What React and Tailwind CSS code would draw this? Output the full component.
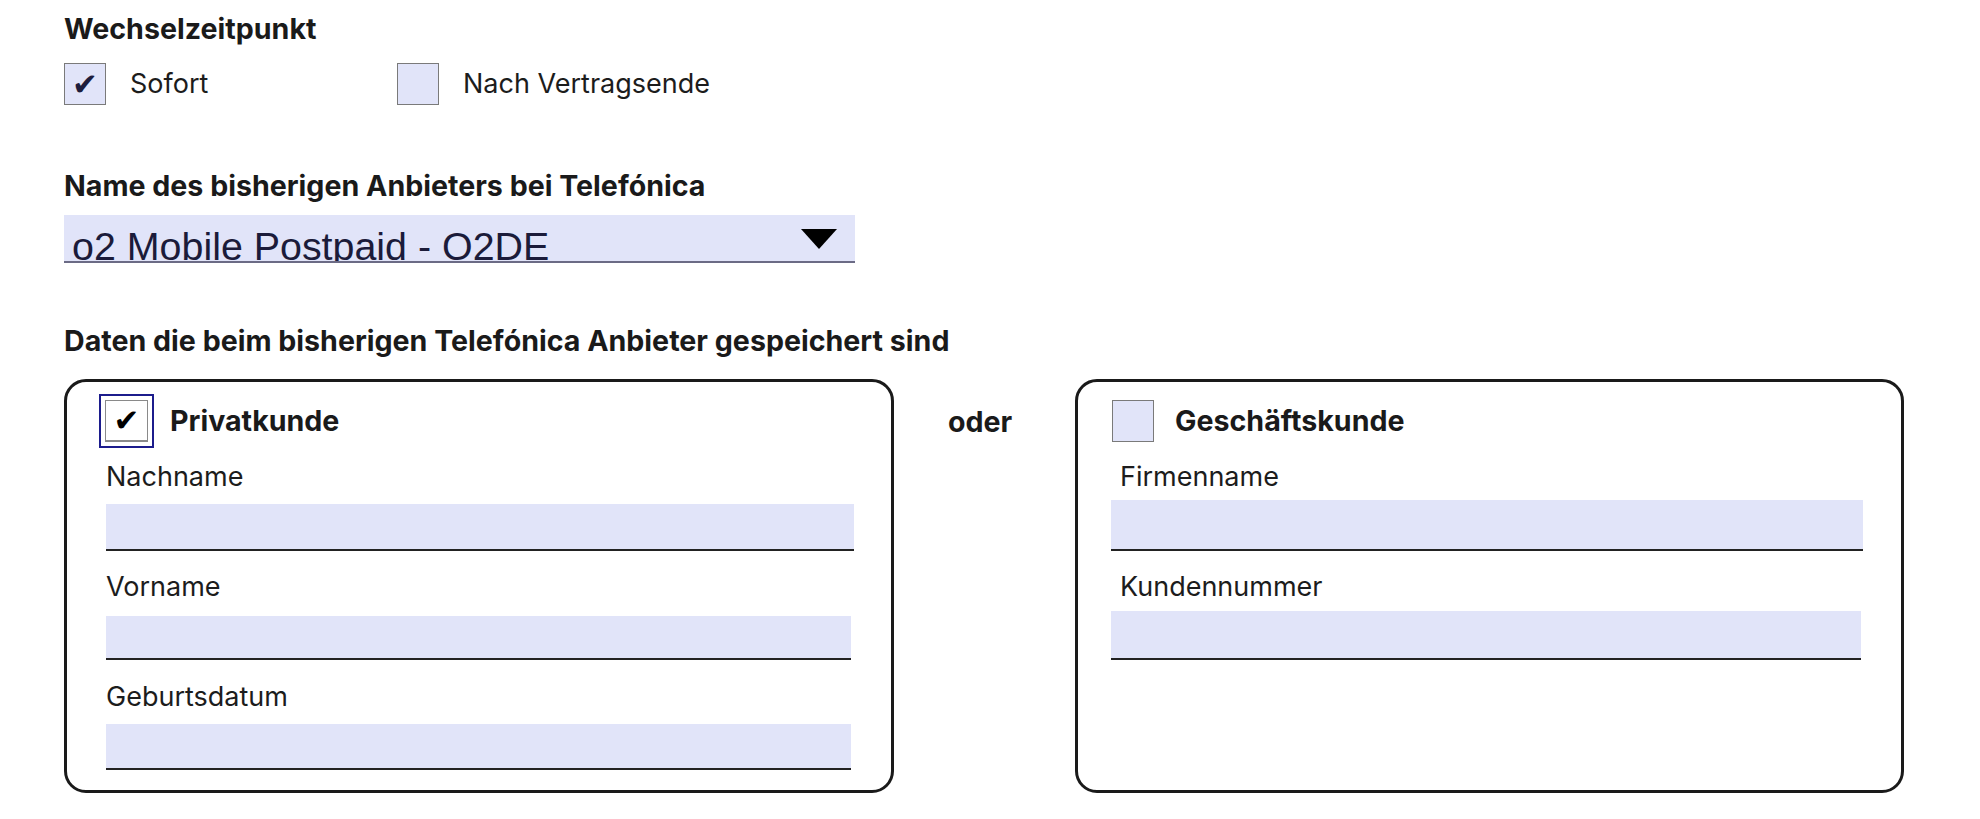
import React from "react";

function Tick({ className }) {
    return (
        <span className={"font-['DejaVu_Sans',sans-serif] leading-none " + className}>✔</span>
    );
}

function Box({ checked }) {
    return (
        <div className="w-[42px] h-[42px] shrink-0 border border-[#7a7a7a] bg-[#e1e4f9] flex items-center justify-center">
            {checked && <Tick className="text-[31px] text-[#1d1d3d]" />}
        </div>
    );
}

function Label({ children, className }) {
    return <p className={"text-[27px] leading-[32px] text-[#1c1c1c] " + className}>{children}</p>;
}

function Heading({ children, className }) {
    return <h2 className={"text-[28.6px] leading-[32px] font-bold text-[#1a1a1a] " + className}>{children}</h2>;
}

export default function App() {
    return (
        <div className="w-[1980px] h-[819px] bg-white font-['Inter',sans-serif] pl-16 pt-[13px] overflow-hidden">
            <Heading>Wechselzeitpunkt</Heading>

            <div className="mt-[18px] flex items-center h-[42px]">
                <div className="w-[333px] flex items-center">
                    <Box checked />
                    <span className="ml-6 text-[27px] text-[#1c1c1c]">Sofort</span>
                </div>
                <div className="flex items-center">
                    <Box />
                    <span className="ml-6 text-[27px] text-[#1c1c1c]">Nach Vertragsende</span>
                </div>
            </div>

            <Heading className="mt-[65px]">Name des bisherigen Anbieters bei Telefónica</Heading>

            <div className="mt-[13px] w-[791px] h-[48px] bg-[#e1e4f9] border-b-2 border-[#6b6b85] overflow-hidden flex justify-between">
                <span className="mt-[12px] ml-2 font-['Liberation_Sans',sans-serif] text-[39.4px] leading-[39px] text-[#1b1b3a] whitespace-nowrap">
                    o2 Mobile Postpaid - O2DE
                </span>
                <svg className="mt-[14px] mr-[18px]" width="36" height="20" viewBox="0 0 36 20">
                    <polygon points="0,0 36,0 18,20" fill="#000" />
                </svg>
            </div>

            <Heading className="mt-[62px]">Daten die beim bisherigen Telefónica Anbieter gespeichert sind</Heading>

            <div className="mt-[22px] flex items-start">
                <div className="w-[830px] h-[414px] border-[3px] border-[#1a1a1a] rounded-[22px] pt-3 pl-[39px]">
                    <div className="h-[54px] -ml-[7px] flex items-center">
                        <div className="w-[55px] h-[54px] border-2 border-[#1c1c8c] p-1">
                            <div className="w-full h-full bg-white border border-[#8a8a8a] border-b-2 flex items-center justify-center">
                                <Tick className="text-[31px] text-black" />
                            </div>
                        </div>
                        <span className="ml-4 text-[28.6px] font-bold text-[#1a1a1a]">Privatkunde</span>
                    </div>
                    <Label className="mt-[13px]">Nachname</Label>
                    <div className="mt-[11px] w-[748px] h-[47px] bg-[#e1e4f9] border-b-2 border-[#222]" />
                    <Label className="mt-5">Vorname</Label>
                    <div className="mt-[13px] w-[745px] h-[44px] bg-[#e1e4f9] border-b-2 border-[#222]" />
                    <Label className="mt-[21px]">Geburtsdatum</Label>
                    <div className="mt-[11px] w-[745px] h-[46px] bg-[#e1e4f9] border-b-2 border-[#222]" />
                </div>

                <div className="w-[181px] pl-[54px] pt-[27px]">
                    <p className="text-[28.6px] leading-[32px] font-bold text-[#1a1a1a]">oder</p>
                </div>

                <div className="w-[829px] h-[414px] border-[3px] border-[#1a1a1a] rounded-[22px] pt-3 pl-[33px]">
                    <div className="h-[54px] ml-px flex items-center">
                        <Box />
                        <span className="ml-[21px] text-[28.6px] font-bold text-[#1a1a1a]">Geschäftskunde</span>
                    </div>
                    <Label className="mt-[13px] ml-[9px]">Firmenname</Label>
                    <div className="mt-[7px] w-[752px] h-[51px] bg-[#e1e4f9] border-b-2 border-[#222]" />
                    <Label className="mt-5 ml-[9px]">Kundennummer</Label>
                    <div className="mt-2 w-[750px] h-[49px] bg-[#e1e4f9] border-b-2 border-[#222]" />
                </div>
            </div>
        </div>
    );
}
